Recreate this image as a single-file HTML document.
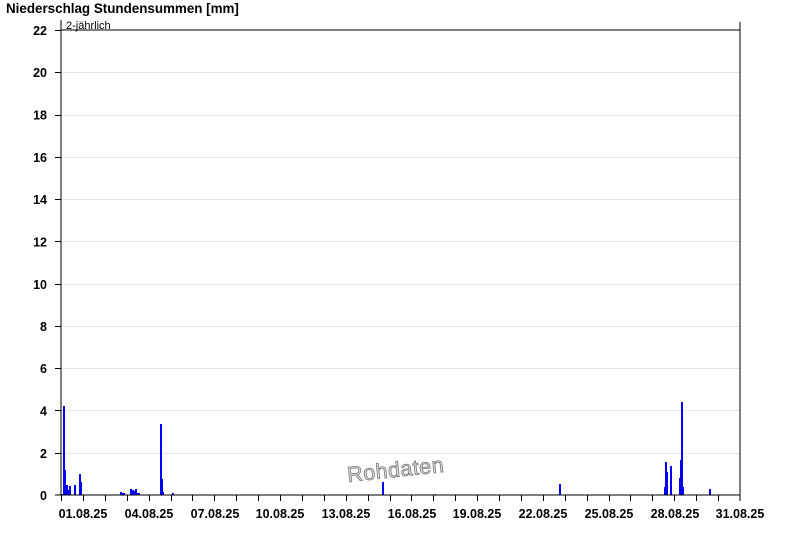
<!DOCTYPE html>
<html><head><meta charset="utf-8"><style>
html,body{margin:0;padding:0;background:#fff;}
svg{display:block;font-family:"Liberation Sans",Arial,sans-serif;}
</style></head><body>
<svg width="800" height="550" viewBox="0 0 800 550" xmlns="http://www.w3.org/2000/svg" shape-rendering="crispEdges">
<rect width="800" height="550" fill="#fff"/>
<text x="6" y="13" font-size="13.4" font-weight="bold" fill="#000">Niederschlag Stundensummen [mm]</text>
<g stroke="#e6e6e6" stroke-width="1">
<line x1="61" x2="740" y1="72.5" y2="72.5"/><line x1="61" x2="740" y1="115.5" y2="115.5"/>
<line x1="61" x2="740" y1="157.5" y2="157.5"/><line x1="61" x2="740" y1="199.5" y2="199.5"/>
<line x1="61" x2="740" y1="241.5" y2="241.5"/><line x1="61" x2="740" y1="284.5" y2="284.5"/>
<line x1="61" x2="740" y1="326.5" y2="326.5"/><line x1="61" x2="740" y1="368.5" y2="368.5"/>
<line x1="61" x2="740" y1="410.5" y2="410.5"/><line x1="61" x2="740" y1="453.5" y2="453.5"/>
</g>
<g fill="#0000ff">
<rect x="61" y="494" width="2" height="1.5"/>
<rect x="63" y="406" width="2" height="89"/>
<rect x="65" y="470" width="1" height="25"/>
<rect x="66" y="485" width="2" height="10"/>
<rect x="68" y="490" width="1" height="5"/>
<rect x="69" y="486" width="2" height="9"/>
<rect x="74" y="485" width="2" height="10"/>
<rect x="79" y="474" width="2" height="21"/>
<rect x="81" y="482" width="1" height="13"/>
<rect x="120" y="492" width="2" height="3"/>
<rect x="122" y="493" width="3" height="2"/>
<rect x="130" y="489" width="2" height="6"/>
<rect x="132" y="490" width="2" height="5"/>
<rect x="134" y="491" width="1" height="4"/>
<rect x="135" y="489" width="2" height="6"/>
<rect x="137" y="493" width="3" height="2"/>
<rect x="160" y="424" width="2" height="71"/>
<rect x="162" y="479" width="1" height="16"/>
<rect x="163" y="492" width="1" height="3"/>
<rect x="172" y="493" width="2" height="2"/>
<rect x="382" y="482" width="2" height="13"/>
<rect x="435" y="494" width="1" height="1"/>
<rect x="559" y="484" width="2" height="11"/>
<rect x="664" y="487" width="1" height="8"/>
<rect x="665" y="462" width="2" height="33"/>
<rect x="667" y="472" width="1" height="23"/>
<rect x="670" y="466" width="2" height="29"/>
<rect x="679" y="478" width="1" height="17"/>
<rect x="680" y="460" width="1" height="35"/>
<rect x="681" y="402" width="2" height="93"/>
<rect x="683" y="487" width="1" height="8"/>
<rect x="709" y="489" width="2" height="6"/>
</g>
<g stroke="#000" stroke-width="1.2" fill="none">
<line x1="61" y1="20" x2="61" y2="495"/>
<line x1="740" y1="22" x2="740" y2="495"/>
<line x1="61" y1="30" x2="740" y2="30"/>
<line x1="61" y1="495" x2="740" y2="495"/>
</g>
<g stroke="#000" stroke-width="1">
<line x1="55" x2="61" y1="30.5" y2="30.5"/><line x1="55" x2="61" y1="72.5" y2="72.5"/><line x1="55" x2="61" y1="115.5" y2="115.5"/><line x1="55" x2="61" y1="157.5" y2="157.5"/><line x1="55" x2="61" y1="199.5" y2="199.5"/><line x1="55" x2="61" y1="241.5" y2="241.5"/><line x1="55" x2="61" y1="284.5" y2="284.5"/><line x1="55" x2="61" y1="326.5" y2="326.5"/><line x1="55" x2="61" y1="368.5" y2="368.5"/><line x1="55" x2="61" y1="410.5" y2="410.5"/><line x1="55" x2="61" y1="453.5" y2="453.5"/><line x1="55" x2="61" y1="495" y2="495"/>
</g>
<g stroke="#000" stroke-width="1">
<line x1="61.5" x2="61.5" y1="495" y2="501"/><line x1="83.5" x2="83.5" y1="495" y2="501"/><line x1="105.5" x2="105.5" y1="495" y2="501"/><line x1="127.5" x2="127.5" y1="495" y2="501"/><line x1="149.5" x2="149.5" y1="495" y2="501"/><line x1="171.5" x2="171.5" y1="495" y2="501"/><line x1="192.5" x2="192.5" y1="495" y2="501"/><line x1="214.5" x2="214.5" y1="495" y2="501"/><line x1="236.5" x2="236.5" y1="495" y2="501"/><line x1="258.5" x2="258.5" y1="495" y2="501"/><line x1="280.5" x2="280.5" y1="495" y2="501"/><line x1="302.5" x2="302.5" y1="495" y2="501"/><line x1="324.5" x2="324.5" y1="495" y2="501"/><line x1="346.5" x2="346.5" y1="495" y2="501"/><line x1="368.5" x2="368.5" y1="495" y2="501"/><line x1="390.5" x2="390.5" y1="495" y2="501"/><line x1="411.5" x2="411.5" y1="495" y2="501"/><line x1="433.5" x2="433.5" y1="495" y2="501"/><line x1="455.5" x2="455.5" y1="495" y2="501"/><line x1="477.5" x2="477.5" y1="495" y2="501"/><line x1="499.5" x2="499.5" y1="495" y2="501"/><line x1="521.5" x2="521.5" y1="495" y2="501"/><line x1="543.5" x2="543.5" y1="495" y2="501"/><line x1="565.5" x2="565.5" y1="495" y2="501"/><line x1="587.5" x2="587.5" y1="495" y2="501"/><line x1="609.5" x2="609.5" y1="495" y2="501"/><line x1="630.5" x2="630.5" y1="495" y2="501"/><line x1="652.5" x2="652.5" y1="495" y2="501"/><line x1="674.5" x2="674.5" y1="495" y2="501"/><line x1="696.5" x2="696.5" y1="495" y2="501"/><line x1="718.5" x2="718.5" y1="495" y2="501"/><line x1="740" x2="740" y1="495" y2="501"/>
</g>
<g font-size="12.5" font-weight="bold" fill="#000" text-anchor="end">
<text x="47" y="35">22</text><text x="47" y="77">20</text><text x="47" y="119.5">18</text><text x="47" y="162">16</text><text x="47" y="204">14</text><text x="47" y="246.5">12</text><text x="47" y="289">10</text><text x="47" y="331">8</text><text x="47" y="373">6</text><text x="47" y="415.5">4</text><text x="47" y="458">2</text><text x="47" y="500">0</text>
</g>
<g font-size="12.5" font-weight="bold" fill="#000" text-anchor="middle">
<text x="83" y="518">01.08.25</text><text x="149" y="518">04.08.25</text><text x="215" y="518">07.08.25</text><text x="280" y="518">10.08.25</text><text x="346" y="518">13.08.25</text><text x="412" y="518">16.08.25</text><text x="477" y="518">19.08.25</text><text x="543" y="518">22.08.25</text><text x="609" y="518">25.08.25</text><text x="675" y="518">28.08.25</text><text x="740" y="518">31.08.25</text>
</g>
<text x="66" y="29" font-size="11" fill="#000">2-jährlich</text>
<text x="348" y="482" font-size="21.5" fill="#e0e0e0" stroke="#777" stroke-width="0.8" letter-spacing="0.5" transform="rotate(-6 348 482)" shape-rendering="auto">Rohdaten</text>
</svg>
</body></html>
